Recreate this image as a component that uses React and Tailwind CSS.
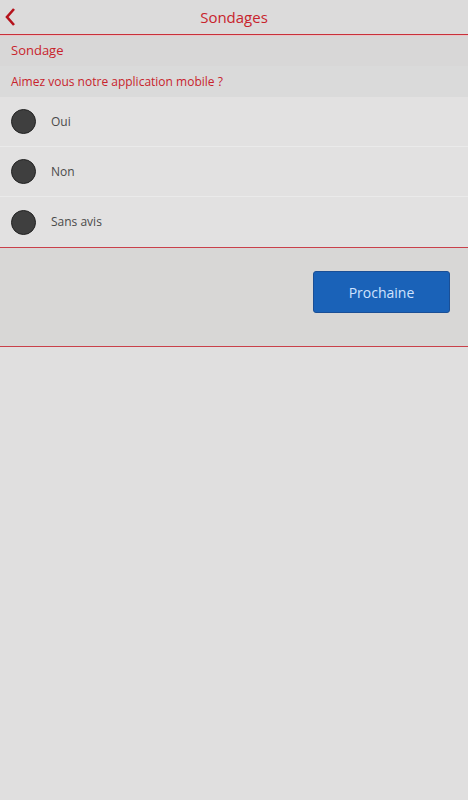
import React, { useState } from 'react';

const options = ['Oui', 'Non', 'Sans avis'];

const App = () => {
  const [choice, setChoice] = useState(null);

  return (
    <div
      className="min-h-[800px] w-[468px] bg-[#e0dfdf] text-[#333]"
      style={{ fontFamily: '"Open Sans", "Noto Sans", sans-serif' }}
    >
      {/* header */}
      <div className="relative flex h-[35px] items-center justify-center border-b border-[#c9303a] bg-[#dcdbdb]">
        <button className="absolute left-[4px] top-[7px] text-[#b5121b]">
          <svg width="12" height="20" viewBox="0 0 12 20">
            <path d="M10 2 L3 10 L10 18" fill="none" stroke="#b5121b" strokeWidth="2.6" />
          </svg>
        </button>
        <h1 className="text-[15px] text-[#c8232c]">Sondages</h1>
      </div>

      <div className="border-t border-[#e8c5c7]" />

      {/* title */}
      <div className="flex h-[30px] items-center bg-[#d8d7d7] px-[11px] text-[13px] text-[#c8232c]">
        Sondage
      </div>
      <div className="flex h-[31px] items-center bg-[#dadada] px-[11px] text-[12px] text-[#c8232c]">
        Aimez vous notre application mobile ?
      </div>

      {/* options */}
      <div className="bg-[#e2e1e1]">
        {options.map((opt, i) => (
          <div
            key={opt}
            onClick={() => setChoice(i)}
            className={
              'flex h-[50px] cursor-pointer items-center gap-[15px] pl-[11px] ' +
              (i < options.length - 1 ? 'border-b border-[#eaeaea]' : '')
            }
          >
            <span className="flex h-[25px] w-[25px] items-center justify-center rounded-full border border-[#222] bg-[#3f3f3f]">
              {choice === i && <span className="h-[9px] w-[9px] rounded-full bg-white" />}
            </span>
            <span className="text-[12px] text-[#4a4a4a]">{opt}</span>
          </div>
        ))}
      </div>

      {/* actions */}
      <div className="flex h-[100px] items-start justify-end border-y border-[#c9404a] bg-[#d8d7d6] pr-[18px] pt-[23px]">
        <button className="h-[42px] w-[137px] rounded-[3px] border border-[#1a4f96] bg-[#1a62b8] text-[14px] text-[#cfe3ff]">
          Prochaine
        </button>
      </div>
    </div>
  );
};

export default App;
